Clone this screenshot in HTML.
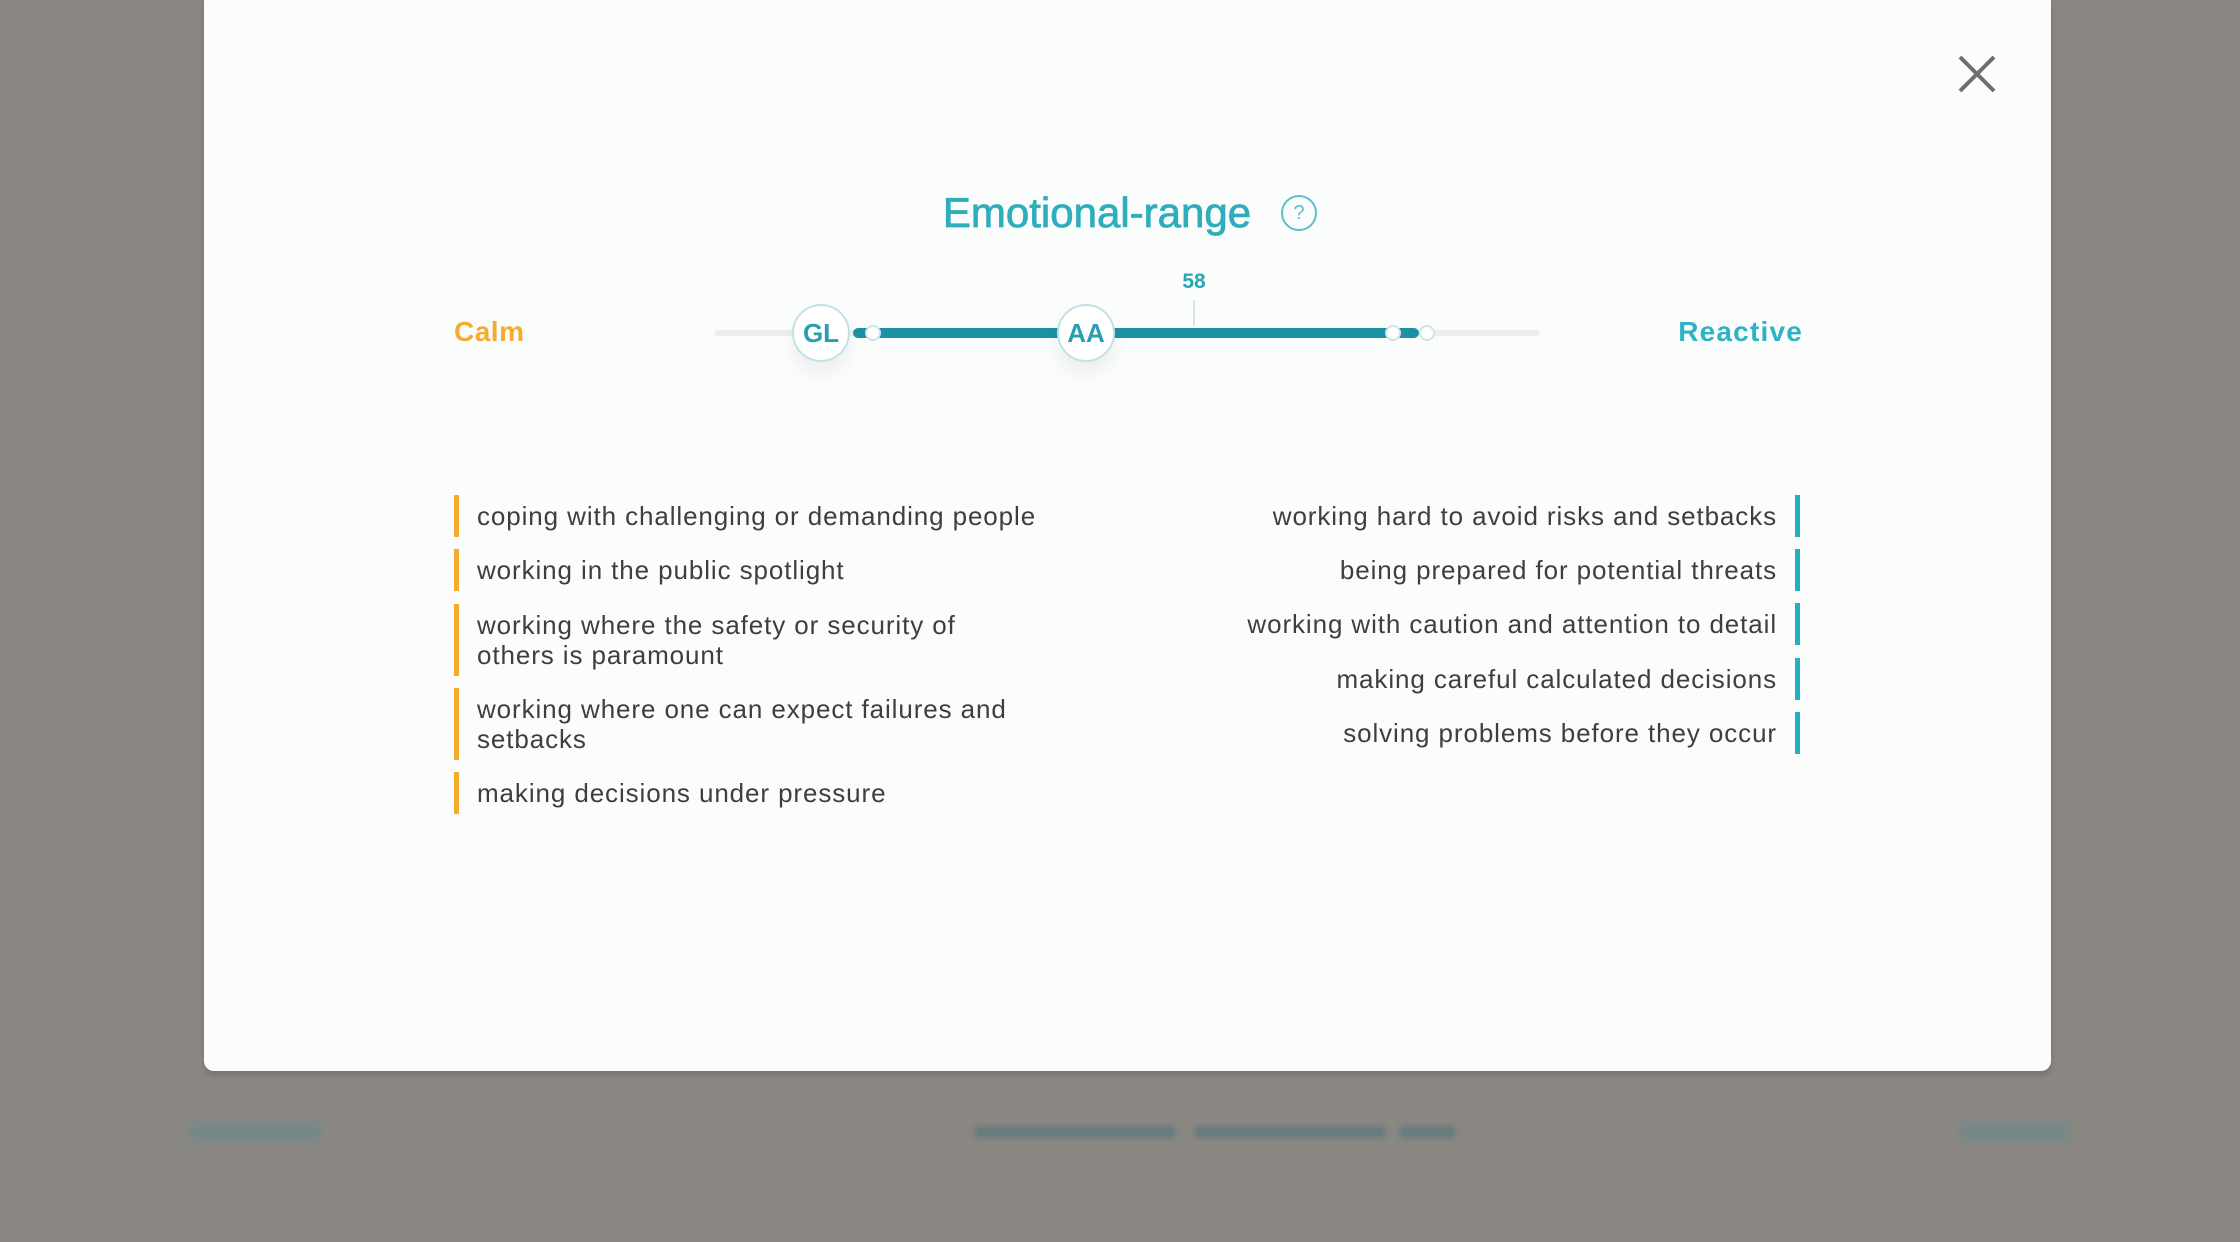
<!DOCTYPE html>
<html><head><meta charset="utf-8"><style>
*{margin:0;padding:0;box-sizing:border-box}
body{width:2240px;height:1242px;background:#8a8782;position:relative;overflow:hidden;font-family:"Liberation Sans",sans-serif}
.modal{position:absolute;left:204px;top:-10px;width:1847px;height:1081px;background:#fbfdfd;border-radius:10px;box-shadow:0 4px 6px rgba(0,0,0,.15)}
.a{position:absolute}
.title{top:189px;text-align:center;font-size:42px;color:#2eaebd;letter-spacing:0px;-webkit-text-stroke:0.8px #2eaebd}
.li{position:absolute;font-size:26px;color:#3e3e3e;line-height:30px;letter-spacing:0.9px}
.l{left:454px;border-left:5px solid #f7ab2e;padding-left:18px}
.r{right:440px;border-right:5px solid #1fb0c3;padding-right:18px;text-align:right}
.circ{position:absolute;width:58px;height:58px;border-radius:50%;background:#fff;border:2px solid #bfe2e7;color:#2a9db0;font-size:26px;font-weight:bold;text-align:center;line-height:54px;box-shadow:0 12px 18px rgba(0,0,0,.06)}
.dot{position:absolute;width:16px;height:16px;border-radius:50%;background:#fff;border:2px solid #cfe4e8}
</style></head><body>
<div class="modal"></div>
<svg class="a" style="left:1957px;top:54px" width="40" height="40"><path d="M3 3L37 37M37 3L3 37" stroke="#6d6d6d" stroke-width="4"/></svg>
<div class="a title" style="left:0;width:2194px">Emotional-range</div>
<div class="a" style="left:1281px;top:195px;width:36px;height:36px;border:2px solid #59c0cc;border-radius:50%;color:#59c0cc;font-size:20px;text-align:center;line-height:32px">?</div>
<div class="a" style="left:1174px;top:270px;width:40px;text-align:center;font-size:21px;font-weight:bold;color:#2aa7b7">58</div>
<div class="a" style="left:1193px;top:300px;width:2px;height:26px;background:#d5e6e8"></div>
<div class="a" style="left:454px;top:316px;font-size:28px;font-weight:bold;color:#f7ab2e;letter-spacing:0.5px">Calm</div>
<div class="a" style="right:437px;top:316px;font-size:28px;font-weight:bold;color:#2eb3c4;letter-spacing:1.2px">Reactive</div>
<div class="a" style="left:714px;top:330px;width:826px;height:6px;background:#eceeee;border-radius:3px"></div>
<div class="a" style="left:853px;top:328px;width:566px;height:10px;background:#1c91a6;border-radius:5px"></div>
<div class="dot" style="left:865px;top:325px"></div>
<div class="dot" style="left:1385px;top:325px"></div>
<div class="dot" style="left:1419px;top:325px"></div>
<div class="circ" style="left:792px;top:304px">GL</div>
<div class="circ" style="left:1057px;top:304px">AA</div>
<div class="li l" style="top:495px;padding:6px 0 6px 18px">coping with challenging or demanding people</div>
<div class="li l" style="top:549px;padding:6px 0 6px 18px">working in the public spotlight</div>
<div class="li l" style="top:604px;padding:6px 0 6px 18px">working where the safety or security of<br>others is paramount</div>
<div class="li l" style="top:688px;padding:6px 0 6px 18px">working where one can expect failures and<br>setbacks</div>
<div class="li l" style="top:772px;padding:6px 0 6px 18px">making decisions under pressure</div>
<div class="li r" style="top:495px;padding:6px 18px 6px 0">working hard to avoid risks and setbacks</div>
<div class="li r" style="top:549px;padding:6px 18px 6px 0">being prepared for potential threats</div>
<div class="li r" style="top:603px;padding:6px 18px 6px 0">working with caution and attention to detail</div>
<div class="li r" style="top:658px;padding:6px 18px 6px 0">making careful calculated decisions</div>
<div class="li r" style="top:712px;padding:6px 18px 6px 0">solving problems before they occur</div>
<div class="a" style="left:975px;top:1126px;width:200px;height:12px;background:#3f6f78;opacity:.5;filter:blur(3px)"></div>
<div class="a" style="left:1195px;top:1126px;width:190px;height:12px;background:#3f6f78;opacity:.5;filter:blur(3px)"></div>
<div class="a" style="left:1400px;top:1126px;width:55px;height:12px;background:#3f6f78;opacity:.5;filter:blur(3px)"></div>
<div class="a" style="left:190px;top:1122px;width:130px;height:20px;background:#4f8a90;opacity:.35;filter:blur(4px)"></div>
<div class="a" style="left:1960px;top:1122px;width:110px;height:20px;background:#4f8a90;opacity:.35;filter:blur(4px)"></div>
</body></html>
